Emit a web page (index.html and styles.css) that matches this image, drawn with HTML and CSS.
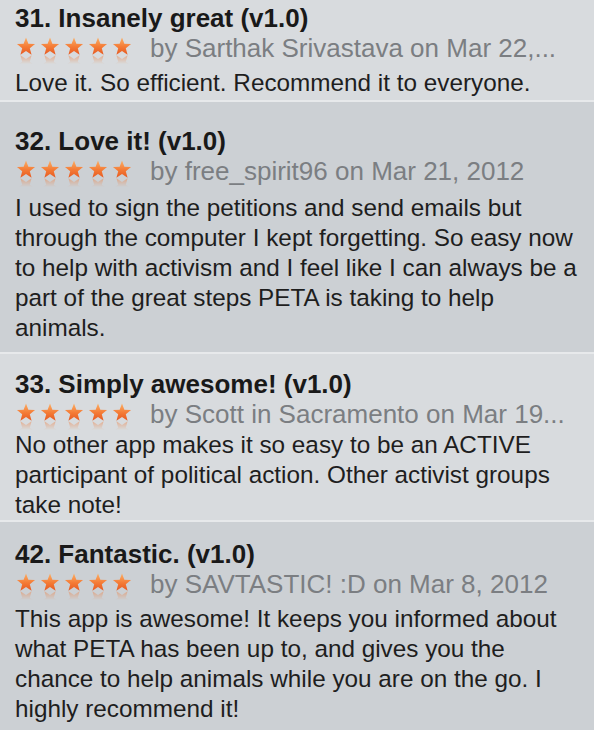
FILE: index.html
```html
<!DOCTYPE html>
<html lang="en">
<head>
  <meta charset="UTF-8">
  <meta name="viewport" content="width=device-width, initial-scale=1.0">
  <title>Customer Reviews</title>
  <link rel="stylesheet" href="styles.css">
</head>
<body>
  <svg class="defs" width="0" height="0" aria-hidden="true">
    <defs>
      <linearGradient id="starFill" x1="0" y1="0" x2="0" y2="1">
        <stop offset="0" stop-color="#fbb067"/>
        <stop offset="0.55" stop-color="#f47a35"/>
        <stop offset="1" stop-color="#e65a22"/>
      </linearGradient>
      <linearGradient id="fade" x1="0" y1="0" x2="0" y2="1">
        <stop offset="0" stop-color="#fff" stop-opacity="0.5"/>
        <stop offset="0.5" stop-color="#fff" stop-opacity="0"/>
      </linearGradient>
      <mask id="fadeMask">
        <rect x="0" y="18" width="120" height="18" fill="url(#fade)"/>
      </mask>
      <polygon id="star" points="0,-9.5 2.35,-3.24 9.03,-2.94 3.8,1.24 5.58,7.69 0,4 -5.58,7.69 -3.8,1.24 -9.03,-2.94 -2.35,-3.24"/>
      <g id="row">
        <use href="#star" x="11" y="10"/>
        <use href="#star" x="35" y="10"/>
        <use href="#star" x="59" y="10"/>
        <use href="#star" x="83" y="10"/>
        <use href="#star" x="107" y="10"/>
      </g>
    </defs>
  </svg>

  <div id="reviews">
    <div class="review review-first">
      <h2 class="title">31. Insanely great (v1.0)</h2>
      <div class="meta">
        <svg class="stars" viewBox="0 0 120 30"><use href="#row" fill="url(#starFill)"/><g mask="url(#fadeMask)"><use href="#row" fill="#f08040" transform="translate(0 36) scale(1 -1)"/></g></svg>
        <span class="author">by Sarthak Srivastava on Mar 22,...</span>
      </div>
      <p class="body">Love it. So efficient. Recommend it to everyone.</p>
    </div>

    <div class="review review-dark review-second">
      <h2 class="title">32. Love it! (v1.0)</h2>
      <div class="meta">
        <svg class="stars" viewBox="0 0 120 30"><use href="#row" fill="url(#starFill)"/><g mask="url(#fadeMask)"><use href="#row" fill="#f08040" transform="translate(0 36) scale(1 -1)"/></g></svg>
        <span class="author">by free_spirit96 on Mar 21, 2012</span>
      </div>
      <p class="body">I used to sign the petitions and send emails but through the computer I kept forgetting. So easy now to help with activism and I feel like I can always be a part of the great steps PETA is taking to help animals.</p>
    </div>

    <div class="review review-third">
      <h2 class="title">33. Simply awesome! (v1.0)</h2>
      <div class="meta">
        <svg class="stars" viewBox="0 0 120 30"><use href="#row" fill="url(#starFill)"/><g mask="url(#fadeMask)"><use href="#row" fill="#f08040" transform="translate(0 36) scale(1 -1)"/></g></svg>
        <span class="author">by Scott in Sacramento on Mar 19...</span>
      </div>
      <p class="body">No other app makes it so easy to be an ACTIVE participant of political action. Other activist groups take note!</p>
    </div>

    <div class="review review-dark review-fourth">
      <h2 class="title">42. Fantastic. (v1.0)</h2>
      <div class="meta">
        <svg class="stars" viewBox="0 0 120 30"><use href="#row" fill="url(#starFill)"/><g mask="url(#fadeMask)"><use href="#row" fill="#f08040" transform="translate(0 36) scale(1 -1)"/></g></svg>
        <span class="author">by SAVTASTIC! :D on Mar 8, 2012</span>
      </div>
      <p class="body">This app is awesome! It keeps you informed about what PETA has been up to, and gives you the chance to help animals while you are on the go. I highly recommend it!</p>
    </div>
  </div>
</body>
</html>
```

FILE: styles.css
```css
body {
  margin: 0;
  padding: 0;
  background-color: #c9cdd1;
  font-family: 'Liberation Sans', Arial, sans-serif;
  color: #1c1c1c;
}
.defs {
  position: absolute;
  width: 0;
  height: 0;
}
#reviews {
  width: 594px;
  height: 730px;
  overflow: hidden;
}
.review {
  background-color: #d8dbde;
  padding: 0 15px;
  border-top: 2px solid #e7e9eb;
  box-sizing: border-box;
  overflow: hidden;
}
.review-dark {
  background-color: #ccd0d4;
}
.review-first {
  border-top: none;
  height: 100px;
  padding-top: 3px;
}
.review-second {
  height: 252px;
  padding-top: 24px;
}
.review-second .body {
  margin-top: 7px;
}
.review-third {
  padding-top: 15px;
  padding-bottom: 0;
}
.review-third .body {
  margin-top: 1px;
}
.review-fourth {
  height: 210px;
  padding-top: 17px;
}
.title {
  margin: 0;
  font-size: 26px;
  font-weight: bold;
  line-height: 30px;
  color: #191919;
}
.meta {
  display: flex;
  align-items: flex-start;
  gap: 15px;
  height: 30px;
}
.stars {
  width: 120px;
  height: 30px;
  margin-top: 4px;
  flex-shrink: 0;
}
.author {
  font-size: 26px;
  line-height: 30px;
  color: #7b7e82;
  white-space: nowrap;
}
.body {
  margin: 5px 0 0 0;
  font-size: 24.3px;
  line-height: 30px;
  color: #1e1e1e;
}
```
